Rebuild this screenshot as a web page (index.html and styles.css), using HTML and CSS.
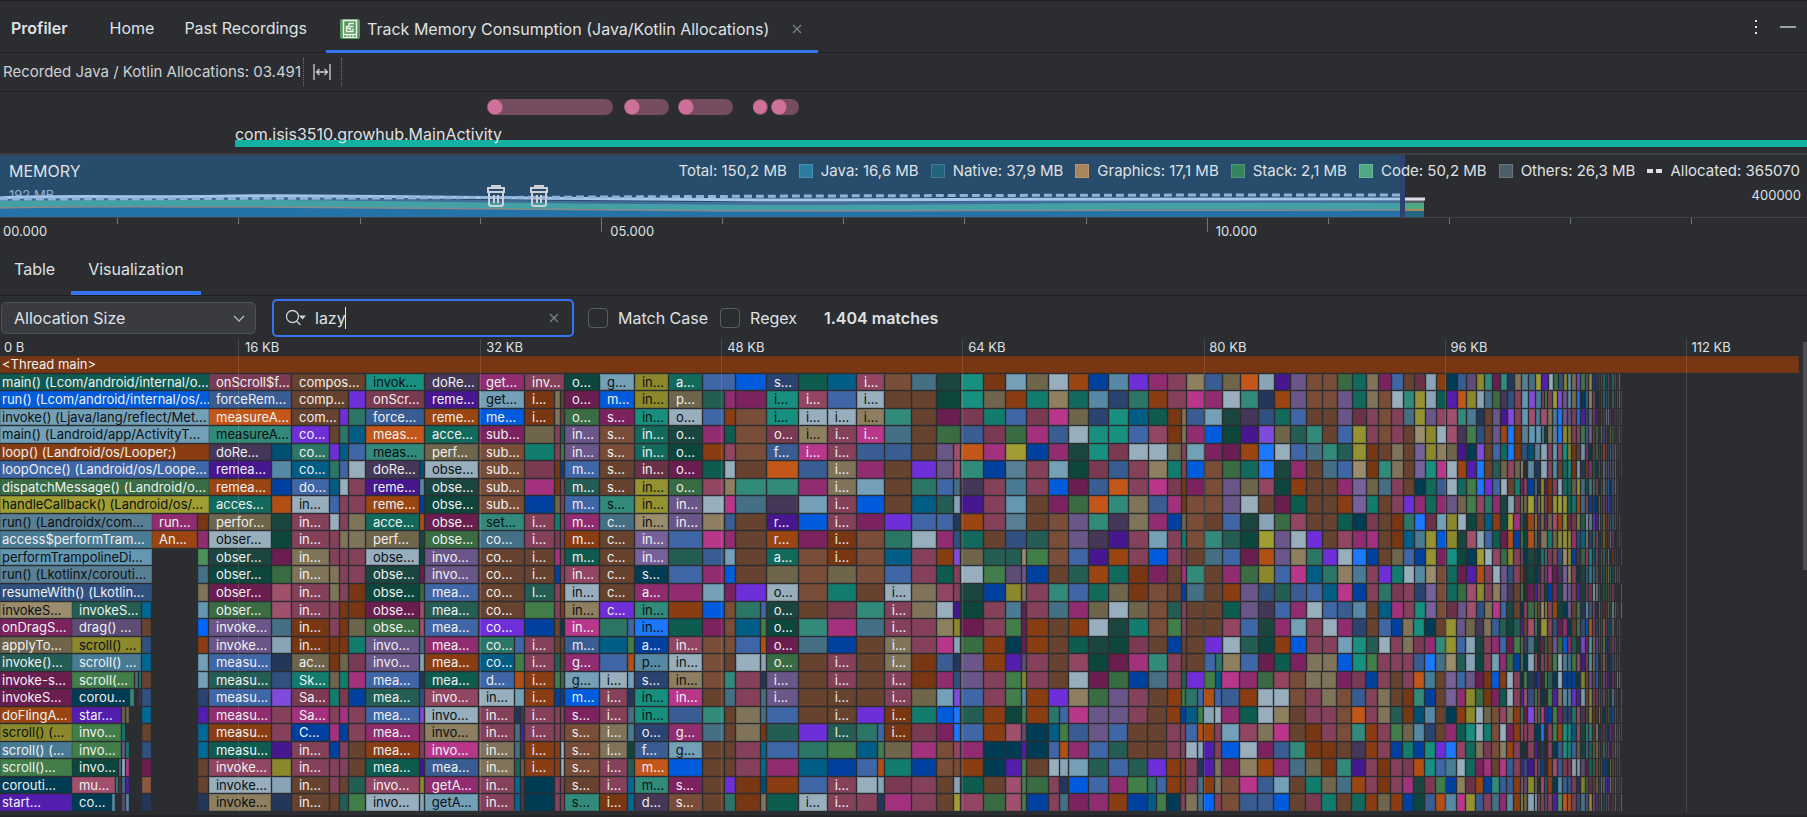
FILE: index.html
```html
<!DOCTYPE html>
<html lang="en">
<head>
<meta charset="utf-8">
<title>Profiler</title>
<link rel="stylesheet" href="styles.css">
</head>
<body>
<header class="tabs-bar">
  <h1 class="tool-title">Profiler</h1>
  <nav class="session-tabs">
    <a class="session-tab" href="#home">Home</a>
    <a class="session-tab" href="#past">Past Recordings</a>
    <div class="session-tab active">
      <svg class="track-icon" viewBox="0 0 20 20" aria-hidden="true">
        <rect width="20" height="20" rx="2" fill="#57965c"/>
        <path d="M3.5 1.500h13v14h-13z" fill="none" stroke="#e6f2e6" stroke-width="1.500"/>
        <path d="M3.500 15.500v3h13v-3M7 16v2.500M10 16v2.500M13 16v2.500" fill="none" stroke="#e6f2e6" stroke-width="1.200"/>
        <path d="M14 4.500H9v3H6.500v5H13v-3M10 7.500h3.500M7 9.500h3.500v2" fill="none" stroke="#e6f2e6" stroke-width="1.400"/>
      </svg>
      <a href="#track">Track Memory Consumption (Java/Kotlin Allocations)</a>
      <button class="icon-btn close" aria-label="Close tab">
        <svg viewBox="0 0 10 10" width="10" height="10"><path d="M1 1l8 8M9 1l-8 8" stroke="#7d8087" stroke-width="1.200"/></svg>
      </button>
    </div>
  </nav>
  <div class="window-actions">
    <button class="icon-btn" aria-label="Options">
      <svg viewBox="0 0 4 18" width="4" height="18"><path d="M1 2h2v2H1zM1 8h2v2H1zM1 14h2v2H1z" fill="#dfe1e5"/></svg>
    </button>
    <button class="icon-btn" aria-label="Hide">
      <svg viewBox="0 0 16 16" width="16" height="16"><path d="M0 8h16" stroke="#9da0a8" stroke-width="2"/></svg>
    </button>
  </div>
</header>

<div class="recording-bar">
  <span>Recorded Java / Kotlin Allocations: 03.491</span>
  <span class="dotted"></span>
  <button class="icon-btn" aria-label="Zoom to selection">
    <svg viewBox="0 0 18 16" width="18" height="16" fill="none" stroke="#ced0d6" stroke-width="1.300"><path d="M1 0v16M17 0v16M3.500 8h11M6.500 5l-3 3 3 3M11.500 5l3 3-3 3"/></svg>
  </button>
  <span class="dotted"></span>
</div>

<section class="events">
  <svg class="touches" viewBox="0 0 1807 16" preserveAspectRatio="none" aria-hidden="true">
    <g fill="#764d60"><rect x="487" width="126" height="16" rx="8"/><rect x="624" width="45" height="16" rx="8"/><rect x="678" width="55" height="16" rx="8"/><rect x="753" width="15" height="16" rx="8"/><rect x="771" width="28" height="16" rx="8"/></g>
    <g fill="#cd719a"><circle cx="495" cy="8" r="7.500"/><circle cx="632" cy="8" r="7.500"/><circle cx="686" cy="8" r="7.500"/><circle cx="760" cy="8" r="7"/><circle cx="779" cy="8" r="7.500"/></g>
  </svg>
  <div class="activity">com.isis3510.growhub.MainActivity</div>
</section>

<section class="memory">
  <div class="memory-head">
    <h2>MEMORY</h2>
    <ul class="legend">
      <li>Total: 150,2 MB</li>
      <li><i class="sw java"></i>Java: 16,6 MB</li>
      <li><i class="sw native"></i>Native: 37,9 MB</li>
      <li><i class="sw graphics"></i>Graphics: 17,1 MB</li>
      <li><i class="sw stack"></i>Stack: 2,1 MB</li>
      <li><i class="sw code"></i>Code: 50,2 MB</li>
      <li><i class="sw others"></i>Others: 26,3 MB</li>
      <li><i class="dash"></i>Allocated: 365070</li>
    </ul>
  </div>
  <div class="memory-scale"><span class="max-mb">192 MB</span><span>400000</span></div>
  <svg class="memory-chart" viewBox="0 0 1807 62" preserveAspectRatio="none" aria-hidden="true">
    <path d="M0 45C60 41 170 44 260 43S600 48 820 47S1100 45 1400 46V62H0z" fill="#426f99"/>
    <path d="M0 46C60 45 170 45 260 45S600 50 820 50S1000 47 1400 48V62H0z" fill="#43a1a5"/>
    <path d="M0 53C60 51 170 52 260 52S600 56 820 56S1000 54 1400 55V62H0z" fill="#2372a8"/>
    <path d="M0 53C60 51 170 52 260 52S600 56 820 56S1000 54 1400 55" fill="none" stroke="#87898c" stroke-width="1.500"/>
    <path d="M0 43C60 40 150 43 230 41S560 45 820 45S1000 43 1400 44" fill="none" stroke="#a4c6e9" stroke-width="3"/>
    <path d="M0 44C60 44 400 43 600 42S1000 40 1400 40" fill="none" stroke="#8db4dc" stroke-width="3" stroke-dasharray="8 4"/>
    <path d="M1405 45h19v17h-19z" fill="#566069"/>
    <path d="M1405 48h19v14h-19z" fill="#4fa883"/>
    <path d="M1405 54h19v8h-19z" fill="#a9845c"/>
    <path d="M1405 56h19v6h-19z" fill="#226884"/>
    <path d="M1405 44h20" stroke="#e0dce8" stroke-width="3"/>
    <g fill="none" stroke="#ced0d6" stroke-width="2"><g id="gc"><path d="M488 33h16v4h-16zM492 33v-2h8v2M489 37v12c0 1.500 .5 2 2 2h10c1.500 0 2-.5 2-2V37M494 40v8M498 40v8"/></g><use href="#gc" x="43"/></g>
  </svg>
</section>

<div class="time-axis">
  <svg class="time-ticks" viewBox="0 0 1807 14" preserveAspectRatio="none" aria-hidden="true"><path d="M117.500 0v6M238.500 0v6M360.500 0v6M480.500 0v6M601.500 0v14M722.500 0v6M843.500 0v6M964.500 0v6M1086.500 0v6M1207.500 0v14M1328.500 0v6M1449.500 0v6M1570.500 0v6M1691.500 0v6" stroke="#6f737a" fill="none"/></svg>
  <span>00.000</span><span>05.000</span><span>10.000</span>
</div>

<nav class="view-tabs">
  <a href="#table">Table</a>
  <a class="active" href="#visualization">Visualization</a>
</nav>

<form class="filter-bar">
  <div class="select-wrap">
    <select aria-label="Metric"><option>Allocation Size</option></select>
    <svg viewBox="0 0 12 8" width="12" height="8" aria-hidden="true"><path d="M1 1l5 5 5-5" fill="none" stroke="#b4b8bf" stroke-width="1.300"/></svg>
  </div>
  <div class="search">
    <svg viewBox="0 0 22 18" width="22" height="18" aria-hidden="true"><circle cx="7.500" cy="7.500" r="6" fill="none" stroke="#ced0d6" stroke-width="1.300"/><path d="M11.500 12l4 4" stroke="#ced0d6" stroke-width="1.300"/><path d="M14 6.500h7l-3.500 4z" fill="#ced0d6"/></svg>
    <input type="text" value="lazy" aria-label="Search"><span class="caret"></span>
    <button type="button" class="icon-btn clear" aria-label="Clear search">
      <svg viewBox="0 0 10 10" width="10" height="10"><path d="M1 1l8 8M9 1l-8 8" stroke="#7d8087" stroke-width="1.200"/></svg>
    </button>
  </div>
  <label class="check"><input type="checkbox">Match Case</label>
  <label class="check"><input type="checkbox">Regex</label>
  <output class="matches">1.404 matches</output>
</form>

<main class="flame">
  <div class="size-axis" id="axis"></div>
  <div class="rows" id="rows"></div>
  <div class="grid-lines" id="grid"></div>
  <div class="scroll-thumb"></div>
</main>
<script src="flame.js"></script>
</body>
</html>
```
FILE: styles.css
```css
* { box-sizing: border-box; }
html, body { height: 100%; }
body {
  margin: 0;
  display: flex;
  flex-direction: column;
  background: #2b2d30;
  color: #dfe1e5;
  font: 16px/20px Inter, "Liberation Sans", sans-serif;
  border-top: 1px solid #1e1f22;
  border-bottom: 2px solid #232528;
  overflow: hidden;
}
a { color: inherit; text-decoration: none; }
h1, h2, ul { margin: 0; padding: 0; font-weight: 400; font-size: inherit; list-style: none; }
.icon-btn { background: none; border: 0; padding: 0; display: flex; align-items: center; }

.tabs-bar {
  flex: none;
  height: 52px;
  display: flex;
  align-items: stretch;
  border-bottom: 1px solid #1e1f22;
  padding: 0 11px;
}
.tool-title { font-weight: 600; align-self: center; margin-right: 27px; padding-top: 3px; }
.session-tabs { display: flex; padding-top: 3px; }
.session-tab { display: flex; align-items: center; padding: 0 15px; }
.session-tab.active {
  gap: 7px;
  margin: 0 0 -1px 4px;
  padding: 0 16px 0 14px;
  position: relative;
}
.session-tab.active::after {
  content: "";
  position: absolute;
  inset: auto 0 0 0;
  height: 3px;
  background: #3574f0;
}
.track-icon { width: 20px; height: 20px; }
.close { margin-left: 16px; }
.window-actions { margin-left: auto; display: flex; gap: 22px; align-items: center; }

.recording-bar {
  flex: none;
  height: 39px;
  display: flex;
  align-items: center;
  border-bottom: 1px solid #1e1f22;
  padding-left: 3px;
  font-size: 15px;
  color: #ced0d6;
}
.recording-bar .icon-btn { margin: 0 8px 0 9px; }
.dotted { width: 1px; height: 28px; margin-left: 2px; border-left: 1px dotted #6f737a; }

.events { flex: none; padding-top: 7px; border-bottom: 2px solid #3c3f41; }
.touches { display: block; width: 100%; height: 16px; }
.activity {
  margin: 10px 0 6px 13%;
  height: 22px;
  border-bottom: 7px solid #12b1a1;
  line-height: 18px;
  white-space: nowrap;
}

.memory {
  flex: none;
  position: relative;
  height: 63px;
  border-bottom: 1px solid #43454a;
  background: linear-gradient(90deg, #284c6c 77.5%, #2d4270 77.5% 77.75%, transparent 77.75%);
}
.memory-chart { position: absolute; inset: 0; width: 100%; height: 100%; }
.memory-head { display: flex; align-items: center; padding: 6px 7px 0 9px; }
.legend { display: flex; margin-left: auto; gap: 12px; font-size: 15px; }
.legend li { display: flex; align-items: center; gap: 8px; white-space: nowrap; }
.sw { width: 14px; height: 14px; border: 1px solid rgba(255, 255, 255, .15); }
.java { background: #2b7ea2; }
.native { background: #226380; }
.graphics { background: #a9845c; }
.stack { background: #35865f; }
.code { background: #4fa883; }
.others { background: #4e5f6a; }
.dash { width: 15px; height: 4px; background: linear-gradient(90deg, #dfe1e5 6px, transparent 6px 9px, #dfe1e5 9px); }
.memory-scale { display: flex; justify-content: space-between; padding: 5px 6px 0 9px; font-size: 13px; line-height: 18px; }
.max-mb { color: #8fb1d3; }

.time-axis { flex: none; position: relative; display: flex; height: 32px; padding-top: 5px; font-size: 13px; line-height: 16px; }
.time-axis span { flex: none; width: 33.5%; padding-left: 3px; }
.time-axis span + span { padding-left: 5px; }
.time-axis span:last-child { width: auto; }
.time-ticks { position: absolute; top: 0; left: 0; width: 100%; height: 14px; }

.view-tabs { flex: none; display: flex; height: 46px; border-bottom: 1px solid #1e1f22; gap: 2px; }
.view-tabs a { display: flex; align-items: center; padding: 0 14px 8px; }
.view-tabs .active { border-bottom: 4px solid #3574f0; padding: 0 17px 4px; }

.filter-bar { flex: none; display: flex; align-items: center; height: 43px; padding-left: 1px; }
.select-wrap { position: relative; width: 255px; margin-right: 16px; }
.select-wrap svg { position: absolute; right: 11px; top: 13px; }
.select-wrap select {
  display: block;
  width: 100%;
  height: 32px;
  appearance: none;
  background: #393b40;
  color: #dfe1e5;
  border: 1px solid #4e5157;
  border-radius: 5px;
  padding: 0 12px;
  font: inherit;
}
.search {
  display: flex;
  align-items: center;
  width: 302px;
  height: 38px;
  border: 2px solid #3574f0;
  border-radius: 5px;
  padding: 0 13px 0 11px;
  margin-right: 14px;
}
.search input { width: 38px; background: none; border: 0; outline: 0; color: inherit; font: inherit; padding: 0 0 0 8px; }
.search .caret { width: 1px; height: 22px; background: #dfe1e5; }
.search .clear { margin-left: auto; }
.check { display: flex; align-items: center; gap: 10px; margin-right: 12px; }
.check input { appearance: none; width: 20px; height: 20px; margin: 0; border: 1px solid #5a5d63; border-radius: 4px; }
.matches { font-weight: 600; margin-left: 15px; }

.flame { flex: 1; min-height: 0; display: flex; flex-direction: column; position: relative; padding: 0 8px 3px 0; }
.size-axis { flex: none; display: flex; height: 17px; font-size: 13px; line-height: 16px; }
.size-axis span { flex: none; width: 13.4%; padding-left: 4px; white-space: nowrap; }
.size-axis span:last-child { width: auto; }
.rows { flex: 1; min-height: 0; display: grid; grid-template-columns: minmax(0, 1fr); grid-auto-rows: 1fr; }
.row { display: flex; min-height: 0; overflow: hidden; font-size: 13px; line-height: 17px; }
.gap { flex: none; }
.cell {
  flex: none;
  border: solid #2b2d30;
  border-width: 0 1px 1px 0;
  box-shadow: inset 0 0 0 1px rgba(43, 45, 48, .22);
  overflow: hidden;
  white-space: nowrap;
  color: #eef0f2;
}
.cell.dark { color: #0b1014; }
.cell.label { padding-left: 7px; }
.cell.root { padding-left: 2px; border-right-width: 0; }
.grid-lines { position: absolute; inset: 0 8px 3px -2px; display: flex; pointer-events: none; }
.grid-lines i { flex: none; width: 13.4%; border-right: 1px solid rgba(255, 255, 255, .13); }
.scroll-thumb { position: absolute; top: 3px; right: 0; width: 4px; height: 48%; background: #4d4e51; }
```
FILE: flame.js
```
const TOTAL = 1799;
const PALETTE = {
  A: '#783612', B: '#0e5b4f', C: '#005bdd', D: '#739fb7', E: '#8a3d12', F: '#3f66a6', G: '#396c42',
  H: '#a09e33', I: '#597f95', J: '#4a7b94', K: '#6397b2', L: '#30507f', M: '#9a8c6c', N: '#7c235f',
  O: '#6f654b', P: '#245d54', Q: '#6a1d4f', R: '#9b4612', S: '#8b892c', T: '#427e4a', U: '#003c54',
  V: '#531dae', W: '#5c4c76', X: '#7a3a52', Y: '#395c93', Z: '#c3571a', a: '#328b7a', b: '#443758',
  c: '#46178e', d: '#116a5c', e: '#98aebd', f: '#1b463f', g: '#0c463d', h: '#6a5688', i: '#a04f6c',
  j: '#456f85', k: '#89a4b6', l: '#23375a', m: '#804adb', n: '#86415a', o: '#934662', p: '#8d7f60',
  q: '#66422f', r: '#7a4d38', s: '#6e2ed8', t: '#2c7668', u: '#005d85', v: '#7f7459', w: '#137d6d',
  x: '#a3317d', y: '#0041a0', z: '#912c70', 0: '#005074', 1: '#b14f15', 2: '#5589a5', 3: '#b8378b',
  4: '#179080', 5: '#1c78ff', 6: '#959231', 7: '#76619a', 8: '#6b3247', 9: '#2b4370', '!': '#8a593f',
  '@': '#4c9259', '#': '#006895', '$': '#0068ff'
};
const DARK_TEXT = 'DHIKMSaep4652';

// Each column: start, end, frame codes from the top, labels.
// '<' widens the cell on its left, '.' leaves the frame empty.
const COLS = [
  [0, 72, 'BCDDEFGHIJKILMNOPQQRSJTUV', 'main() (Lcom/android/internal/o...|run() (Lcom/android/internal/os/...|invoke() (Ljava/lang/reflect/Met...|main() (Landroid/app/ActivityT...|loop() (Landroid/os/Looper;)|loopOnce() (Landroid/os/Loope...|dispatchMessage() (Landroid/o...|handleCallback() (Landroid/os/...|run() (Landroidx/com...|access$performTram...|performTrampolineDi...|run() (Lkotlinx/corouti...|resumeWith() (Lkotlin...|invokeS...|onDragS...|applyTo...|invoke()...|invoke-s...|invokeS...|doFlingA...|scroll() (...|scroll() (...|scroll()...|corouti...|start...'],
  [72, 112, '<<<<<<<<<<<<<PWSJTUVTTgiU', '|||||||||||||invokeS...|drag() ...|scroll() ...|scroll() ...|scroll(...|corou...|star...|invo...|invo...|invo...|mu...|co...'],
  [112, 116, '<<<<<<<<<<<<<<<<<<<<<<<<2'],
  [116, 119, '<<<<<<<<<<<<<<<<<<<<<<<a.'],
  [119, 122, '<<<<<<<<<<<<<<<<<<<<<<jb.'],
  [122, 126, '<<<<<<<<<<<<<<<<<<<OwhejW'],
  [126, 130, '<<<<<<<<<<<<<<<<<<<O.w3V2'],
  [130, 135, '<<<<<<<<<<<<<<<<<<a......'],
  [135, 139, '<<<<<<<<<<<<<<<<<j.......'],
  [139, 142, '<<<<<<<<<<<<<<<<<wb......'],
  [142, 152, '<<<<<<<<<<<<<#qL#qL#qLQ!l'],
  [152, 198, '<<<<<<<<zR...............', '||||||||run...|An...'],
  [198, 209, '<<<<<<<<Az@jvK$EDD9V##qql'],
  [209, 272, 'XYZabcRdOefgQGhhFPFzEBoep', 'onScroll$f...|forceRem...|measureA...|measureA...|doRe...|remea...|remea...|acces...|perfor...|obser...|obser...|obser...|obser...|obser...|invoke...|invoke...|measu...|measu...|measu...|measu...|measu...|measu...|invoke...|invoke...|invoke...'],
  [272, 292, '<<<<02y1fgQGiijklLmnncSkl'],
  [292, 330, 'qqqstuFennvvnnAAOwXxynnqq', 'compos...|comp...|com...|co...|co...|co...|do...|in...|in...|in...|in...|in...|in...|in...|in...|in...|ac...|Sk...|Sa...|Sa...|C...|in...|in...|in...|in...'],
  [330, 340, '<<<qstuFennvvnnAAOwnxynnq'],
  [340, 349, '<<stuFennvnnnAAAOwXxynnqP'],
  [349, 366, '<stuFennvvnnAAOwXxynnqqPT'],
  [366, 420, '4XYZabcRdOefgQGhhFPFzEBoe', 'invok...|onScr...|force...|meas...|meas...|doRe...|reme...|reme...|acce...|perf...|obse...|obse...|obse...|obse...|obse...|invo...|invo...|mea...|mea...|mea...|mea...|mea...|mea...|invo...|invo...'],
  [420, 425, '<<<<<02y1fgQGiijklLmnncSk'],
  [425, 479, 'bcRdOefgQGhhFPFzEBoep3YzD', 'doRe...|reme...|reme...|acce...|perf...|obse...|obse...|obse...|obse...|obse...|invo...|invo...|mea...|mea...|mea...|mea...|mea...|mea...|invo...|invo...|invo...|invo...|mea...|getA...|getA...'],
  [479, 515, 'zDCNrrrrajqqqqstuFennvvnn', 'get...|get...|me...|sub...|sub...|sub...|sub...|sub...|set...|co...|co...|co...|co...|co...|co...|co...|co...|d...|in...|in...|in...|in...|in...|in...|in...'],
  [515, 521, '<<<<<<<<<<<<<<<FT1DljjP##'],
  [521, 525, '<<<<<<<<<<<<<<<<<<<bVbObb'],
  [525, 555, 'nAAOwXxynnqqPTynnEEnnEEUU', 'inv...|i...|i...||||||i...|i...|i...|i...|l...|||i...|i...|i...|i...|i...|i...|i...|i...'],
  [555, 561, '<vvnnAAOwXxynnqqPTynnEEnn'],
  [561, 565, '<qqPTynnnnnnEEUqqGynneenn'],
  [565, 600, 'gQGhhFPFzEBoep3YzDCNrrrqa', 'o...|o...|o...|in...|in...|m...|m...|m...|m...|m...|m...|in...|in...|in...|in...|m...|g...|g...|m...|s...|s...|s...|s...|s...|s...'],
  [600, 628, 'DCNrrqqajqqqqstuFennvvnnA', 'g...|m...|s...|s...|s...|s...|s...|s...|c...|c...|c...|c...|c...|c...||||i...|i...|i...|i...|i...|i...|i...|i...'],
  [628, 635, '<<<<<<<<<<<<<<FT1DljJgP##'],
  [635, 669, 'SS4dd866M77Uza5y29449YZab', 'in...|in...|in...|in...|in...|in...|in...|in...|in...|in...|in...|s...|a...|in...|in...|a...|p...|s...|in...|in...|o...|f...|m...|m...|d...'],
  [669, 703, 'dOefgQGhhFPFzEBoep3YzDCNr', 'a...|p...|o...|o...|o...|o...|o...|in...|in...|||||||in...|in...|in...|in...||g...|g...||s...|s...'],
  [703, 725, 'FPFzEBoep3YzDCNrrrqajqqqq'],
  [725, 736, '<zEBoep3YzDCNrrrqajqqqqst'],
  [736, 761, 'CNrrrqajqqqqstuFennvvnnAA'],
  [761, 767, '<<<<<<<<<<<<<FT1kljjA##0v'],
  [767, 799, '944XYZabcRdOefgQGhhFPFzEB', 's...|i...|i...|o...|f...||||r...|r...|a...||o...|o...|o...|o...|o...|i...|i...'],
  [799, 828, 'Boep3YzDCNrrrqajqqqqstuFe', '|i...|i...|i...|i...||||||||||||||||||||i...'],
  [828, 857, 'uFennvvnnAAOwXxynnqqPTynn', '||i...|i...|i...|i...|i...|i...|i...|i...|i...||||||i...|i...|i...|i...|l...|||i...|i...'],
  [857, 878, 'oep3YzDCNrrrqajqqqqstuFen', 'i...|i...|i...|i...'],
  [878, 885, '<<<<<<<<<<<<<<<<<<<<FT1kl'],
  [885, 912, 'rqajYqqqstuFennvvnnAAOwXx', '||||||||||||i...|i...|i...|i...|i...|i...|i...|i...|i...'],
  [912, 937, 'jqqqqstuFennvvnnAAOwXxynn'],
  [937, 954, 'fgQGhhFPFzEBoep3YzDCNrrqq'],
  [954, 961, '<<<<iijklLmnncSklLm55orkH'],
  [961, 984, '44XYZabcRdOefgQGhhFPFzEBo'],
  [984, 1006, 'AOwXxynnnqPTynnEEnnEEUUqG'],
  [1006, 1022, 'DEFGHIJKILPWSJTUVTTgiUVii'],
  [1022, 1027, '<<<<<<<<<<MhvQQQWS2TWVTTT'],
  [1027, 1049, 'OwXxynnqqPTynnEEnnEEUUqGy'],
  [1049, 1060, 'ep3YzDCNrrrqajqqqqstuFenn'],
  [1060, 1069, '<<<<<<<<<<<<<<<<<<<FT1klj'],
  [1069, 1089, 'RdOefgQGhhFPFzEBoep3YzDCN'],
  [1089, 1109, 'y2944XYZabcRdOefgQGhhFPFz'],
  [1109, 1129, '2944XYZabcRdOefgQGhhFPFzE'],
  [1129, 1149, 'stuFennvvnnAAOwXxynnqqPTy'],
  [1149, 1158, 'zEBoep3YzDCNrrrqajqqqqstu'],
  [1158, 1168, '<<<<<<<<<<<<<<<<<<<<<<<FT'],
  [1168, 1182, 'nnAAOwXxynnqqPTynnEEnnEEU'],
  [1182, 1187, '<<vvnnAAOwXxynnqqPTynnEEn'],
  [1187, 1199, 'p3YzDCNrrrqajqqqqstuFennv'],
  [1199, 1205, '<<<<<<<<<<<<<<<<<<FT1kljj'],
  [1205, 1216, 'YzDCNrrrqajqqqqsFT1kRVVE$'],
  [1216, 1223, '<<<<<<<<<<<<<<<<tuFennvvn'],
  [1223, 1241, 'OefgQGhhFPFzEBoep3YzDCNrr'],
  [1241, 1259, 'ZabcRdOefgQGhhFPFzEBoep3Y'],
  [1259, 1275, 'klLm55oqkH1SLbfgQGeevNRYY'],
  [1275, 1291, 'cRdOefgQGhhFPFzEBoep3YzDC'],
  [1291, 1307, 'hhFPFzEBoep3YzDCNrrqqajqq'],
  [1307, 1323, 'rrqajqqqqstuFennvvnnAAOwX'],
  [1323, 1338, 'rrqqajqqqqstuFenvvvnnAAOw'],
  [1338, 1353, 'GhhFPFzEBoep3YzDCNrrrqajq'],
  [1353, 1367, 'dd866M77Uz5Jy2944XYZabcRd'],
  [1367, 1379, 'vvnnAAOwXxynnqqPTynnEEnnE'],
  [1379, 1392, 'NrrrqajqqqqstuFennvvnnAAO'],
  [1392, 1404, 'FennvvnnAAOwXxynnqqPTynnE'],
  [1404, 1415, 'qajqqqqstuFennvvnnAAOwXxy'],
  [1415, 1426, '866M77Uz5Jy2944XYZa02y1fg'],
  [1426, 1437, 'kkhSS4dd866M77Uz5Jy2944XY'],
  [1437, 1447, 'EBoep3YzDCNrrrqajqqqqsFT1'],
  [1447, 1458, 'UViiOeehSS4dd866M77Uz5Jy2'],
  [1458, 1467, 'YZabcRdOefgQGhhFPFzEBoep3'],
  [1467, 1477, 'WSJTUVTTgiUViiOkkhSS4dd86'],
  [1477, 1485, 'SklLm55oqkH1SLbfgQGeevNRY'],
  [1485, 1493, 'ajqqqqstuFennvvnnAAOwXxyn'],
  [1493, 1501, 'QGhhFPFzEBoep3YzDCNrrrqaj'],
  [1501, 1508, 'abcRdOefgQGhhFPFzEBoep3Yz'],
  [1508, 1515, 'lLm55oqkH1SLbfgQGeevNRYY2'],
  [1515, 1522, 'vnnAAOwXxynnqqPTynnEEnnEE'],
  [1522, 1525, 'IKKILMNvPTnETUVTTUVTiUViS'],
  [1525, 1529, '<<<<<.nO.gU..nqbUTiQn.LWO'],
  [1529, 1536, 'jmiK02yHR1fgQGijklLmnncSk'],
  [1536, 1539, 'HJJKIljWSTgUVTTgiUTiUViOk'],
  [1539, 1542, '<<<<<<.vNQUlnE...VnT<.W.n'],
  [1542, 1546, 'VniIkkSSOvwnnM6Qn.U35lyin'],
  [1546, 1549, '<T<g<<QnN<jWgS<GoT.V...LW'],
  [1549, 1554, 'envvnnAAOwXxynnqqPTynnEEn'],
  [1554, 1559, 'GHJIK2n6iOnQNRLhTUVTTUiUV'],
  [1559, 1564, 'Lm55oqkHRSLbfgQGeevNRYY2@'],
  [1564, 1569, 'ShhS4dd6S6M77UzCJy2944XYZ']
];

const ROWS = 25;
// Rotations of the common call stacks, used for the thin frames at the far right.
const STACKS = ['KKhSS4dd866M77UzJy2944XYZ', 'UVTTgiUViiOklLm55oqkH1SLb', 'QGhhFPFzEBoep3YzDCNrrrqaj', 'stuFennvvnnAAOwXxynnqqPTy', 'DljjP#GfglLmcSkbfgWSJTUVT'];
const starts = [1569, 1573, 1578, 1582, 1587, 1590, 1594, 1597, 1600, 1602, 1604, 1607, 1609, 1611, 1613, 1616, 1618, 1620, 1622, 1624];
starts.slice(0, -1).forEach((x, i) => {
  const s = STACKS[(i * 3) % STACKS.length];
  const k = (i * 7) % ROWS;
  COLS.push([x, starts[i + 1], s.slice(k) + s.slice(0, k), '', i > 6 ? 0.65 : 0.9]);
});

const pct = (v) => (v / TOTAL * 100).toFixed(4) + '%';

function addCell(row, start, end, code, text, alpha) {
  const el = document.createElement('div');
  if (code === '.') {
    el.className = 'gap';
  } else {
    el.className = 'cell' + (DARK_TEXT.includes(code) ? ' dark' : '');
    if (text) el.classList.add(start === 0 ? 'root' : 'label');
    el.style.backgroundColor = PALETTE[code];
    if (alpha) el.style.opacity = alpha;
    if (text) el.textContent = text;
  }
  el.style.width = pct(end - start);
  row.append(el);
}

const rowsEl = document.getElementById('rows');
const head = document.createElement('div');
head.className = 'row';
addCell(head, 0, TOTAL, 'A', '<Thread main>');
rowsEl.append(head);

for (let r = 0; r < ROWS; r++) {
  const row = document.createElement('div');
  row.className = 'row';
  let open = null;
  for (const [start, end, codes, labels, alpha] of COLS) {
    const code = codes[r] || '.';
    if (code === '<' && open) {
      open.end = end;
      continue;
    }
    if (open) addCell(row, open.start, open.end, open.code, open.text, open.alpha);
    open = { start, end, code, alpha, text: labels ? labels.split('|')[r] : '' };
  }
  addCell(row, open.start, open.end, open.code, open.text, open.alpha);
  rowsEl.append(row);
}

const axis = document.getElementById('axis');
const grid = document.getElementById('grid');
['0 B', '16 KB', '32 KB', '48 KB', '64 KB', '80 KB', '96 KB', '112 KB'].forEach((t, i) => {
  const s = document.createElement('span');
  s.textContent = t;
  axis.append(s);
  if (i < 7) grid.append(document.createElement('i'));
});
```
